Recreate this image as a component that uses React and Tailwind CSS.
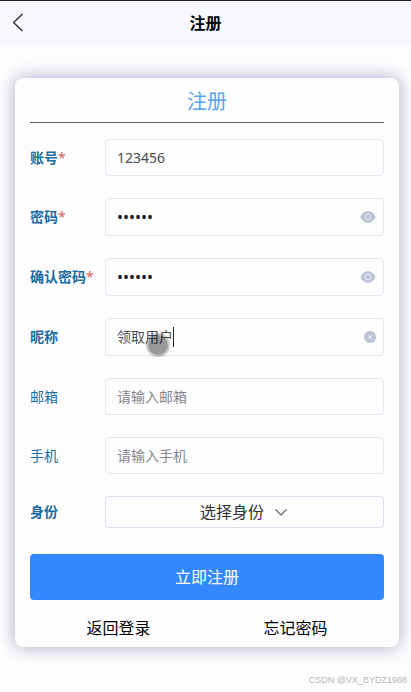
import React, { useState } from 'react';

const fields = [
  { id: 'account', label: '账号', required: true, bold: true, type: 'text' },
  { id: 'password', label: '密码', required: true, bold: true, type: 'password' },
  { id: 'confirm', label: '确认密码', required: true, bold: true, type: 'password' },
  { id: 'nickname', label: '昵称', bold: true, type: 'text', clearable: true },
  { id: 'email', label: '邮箱', type: 'text', placeholder: '请输入邮箱' },
  { id: 'phone', label: '手机', type: 'text', placeholder: '请输入手机' }
];

const BackIcon = () => (
  <svg className="w-3 h-5" viewBox="0 0 12 20" fill="none" stroke="#222" strokeWidth="1.2">
    <path d="M10.500 1 1.500 9.500l9 8.500" />
  </svg>
);

const EyeIcon = () => (
  <svg className="w-4 h-4" viewBox="0 0 16 16">
    <path d="M.4 8C2 4.200 4.800 2.200 8 2.200S14 4.200 15.600 8C14 11.800 11.200 13.800 8 13.800S2 11.800.4 8Z" fill="#bcc2d6" />
    <circle cx="8" cy="8" r="2.900" fill="none" stroke="#eceef5" strokeWidth=".9" />
  </svg>
);

const ClearIcon = () => (
  <svg className="w-3 h-3" viewBox="0 0 12 12">
    <circle cx="6" cy="6" r="6" fill="#bcc2d6" />
    <path d="m3.800 3.800 4.400 4.400M8.200 3.800 3.800 8.200" stroke="#f4f5fa" strokeWidth=".9" />
  </svg>
);

const ChevronIcon = () => (
  <svg className="w-3 h-3" viewBox="0 0 12 12" fill="none" stroke="#606266" strokeWidth="1.1">
    <path d="m.5 3.500 5.500 5.500 5.500-5.500" />
  </svg>
);

const Label = ({ id, bold, required, children }) => (
  <label
    htmlFor={id}
    className={`w-[75px] shrink-0 whitespace-nowrap text-sm text-[#1c6ca1] ${bold ? 'font-bold' : ''}`}
  >
    {children}
    {required && <span className="font-normal text-[#d9625f]">*</span>}
  </label>
);

const Field = ({ field, value, onChange }) => {
  const [visible, setVisible] = useState(false);
  const isPassword = field.type === 'password';
  const hasSuffix = isPassword || field.clearable;
  const masked = isPassword && !visible;

  return (
    <div className="flex items-center">
      <Label id={field.id} bold={field.bold} required={field.required}>
        {field.label}
      </Label>
      <div
        className={`relative flex flex-1 min-w-0 items-center rounded border border-[#e4e4f3] pl-[11px] pr-[7px] ${
          hasSuffix ? 'h-[38px]' : 'h-[37px]'
        }`}
      >
        <input
          id={field.id}
          type={masked ? 'password' : 'text'}
          value={value}
          placeholder={field.placeholder}
          onChange={(e) => onChange(e.target.value)}
          className={`w-full min-w-0 bg-transparent outline-none placeholder:text-[#85878d] ${
            masked ? 'text-base text-[#1f2024]' : 'text-sm text-[#4b4d54]'
          }`}
        />
        {isPassword && (
          <button type="button" aria-label="显示密码" onClick={() => setVisible(!visible)}>
            <EyeIcon />
          </button>
        )}
        {field.clearable && (
          <>
            <button type="button" aria-label="清空" onClick={() => onChange('')}>
              <ClearIcon />
            </button>
            <span className="absolute left-[67px] top-2 h-5 w-px bg-[#222]" />
            <span className="absolute left-10 top-[14px] h-6 w-6 rounded-full border-2 border-black/20 bg-black/40 bg-clip-padding" />
          </>
        )}
      </div>
    </div>
  );
};

const App = () => {
  const [form, setForm] = useState({
    account: '123456',
    password: '123456',
    confirm: '123456',
    nickname: '领取用户',
    email: '',
    phone: ''
  });

  return (
    <div className="min-h-screen bg-[#fdfdfe] font-['Noto_Sans','Noto_Sans_CJK_SC',sans-serif] text-black">
      <header className="grid h-[45px] grid-cols-3 items-center border-t border-[#1c1828] bg-[#f7f7fe] px-3">
        <button type="button" aria-label="返回" className="justify-self-start">
          <BackIcon />
        </button>
        <h1 className="text-center text-base font-bold">注册</h1>
      </header>

      <main className="ml-[15px] mr-3 mt-[33px] rounded-lg bg-[#fdfdfe] px-[15px] pb-[7px] shadow-[0_0_16px_2px_#b9b7cf]">
        <h2 className="border-b border-[#5f5f66] pb-1.5 pt-2.5 text-center text-xl text-[#57a3f3]">注册</h2>

        <form className="pt-4" onSubmit={(e) => e.preventDefault()}>
          <div className="flex flex-col gap-[22px]">
            {fields.map((field) => (
              <Field
                key={field.id}
                field={field}
                value={form[field.id]}
                onChange={(value) => setForm({ ...form, [field.id]: value })}
              />
            ))}

            <div className="flex items-center">
              <Label id="role" bold>身份</Label>
              <div className="flex h-8 flex-1 items-center justify-center gap-2.5 rounded border border-[#dcdcec] pr-0.5">
                <select id="role" className="appearance-none bg-transparent text-base text-[#303133] outline-none">
                  <option>选择身份</option>
                </select>
                <ChevronIcon />
              </div>
            </div>
          </div>

          <button type="submit" className="mt-[26px] h-[46px] w-full rounded bg-[#3388ff] text-base text-white">
            立即注册
          </button>
        </form>

        <div className="flex justify-around pt-4 text-base">
          <a href="#login">返回登录</a>
          <a href="#forgot">忘记密码</a>
        </div>
      </main>

      <footer className="pr-1 pt-[27px] text-right font-['Liberation_Sans',sans-serif] text-[9px] text-[#b5b5b8]">
        CSDN @VX_BYDZ1988
      </footer>
    </div>
  );
};

export default App;
